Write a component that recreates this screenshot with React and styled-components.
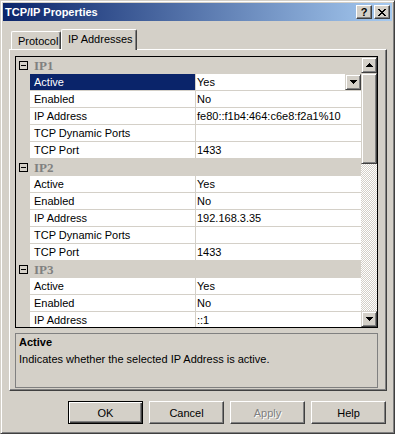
import React from 'react'
import styled, { createGlobalStyle, css } from 'styled-components'

const GlobalStyle = createGlobalStyle`
    * { box-sizing: border-box; }
    body {
        margin: 0;
        font-family: "Liberation Sans", Arial, sans-serif;
        font-size: 11px;
        color: #000;
    }
`

const raised = css`
    border: 1px solid;
    border-color: #d4d0c8 #404040 #404040 #d4d0c8;
    box-shadow: inset 1px 1px #fff, inset -1px -1px #808080;
    background: #d4d0c8;
`

const Window = styled.div`
    width: 395px;
    height: 434px;
    padding: 2px;
    background: #d4d0c8;
    border: 1px solid;
    border-color: #d4d0c8 #404040 #404040 #d4d0c8;
    box-shadow: inset 1px 1px #fff, inset -1px -1px #808080;
    display: flex;
    flex-direction: column;
`

const TitleBar = styled.div`
    height: 18px;
    flex-shrink: 0;
    display: flex;
    align-items: center;
    justify-content: space-between;
    padding: 0 2px 0 2px;
    background: linear-gradient(to right, #0a246a, #a6caf0);
`

const Caption = styled.span`
    color: #fff;
    font-weight: bold;
    font-size: 11px;
`

const CaptionButtons = styled.div`
    display: flex;
    gap: 2px;
`

const CaptionButton = styled.div`
    ${raised}
    width: 16px;
    height: 14px;
    display: flex;
    align-items: center;
    justify-content: center;
    font-weight: bold;
    font-size: 11px;
    line-height: 12px;
    border-color: #fff #404040 #404040 #fff;
    box-shadow: inset -1px -1px #808080;
`

const Body = styled.div`
    flex: 1;
    display: flex;
    flex-direction: column;
    padding: 8px 5px 0 6px;
`

const TabStrip = styled.div`
    height: 20px;
    flex-shrink: 0;
    display: flex;
    align-items: flex-end;
    padding-left: 2px;
`

const Tab = styled.div`
    position: relative;
    background: #d4d0c8;
    border: 1px solid;
    border-bottom: none;
    border-color: #fff #404040 #404040 #fff;
    box-shadow: inset -1px 0 #808080;
    border-radius: 2px 2px 0 0;
    width: ${(props) => props.$width}px;
    height: ${(props) => (props.$active ? 21 : 18)}px;
    margin-bottom: ${(props) => (props.$active ? -1 : 0)}px;
    z-index: ${(props) => (props.$active ? 2 : 1)};
    padding: 3px 0 0 6px;
    line-height: 13px;
`

const Panel = styled.div`
    height: 342px;
    flex-shrink: 0;
    border: 1px solid;
    border-color: #fff #404040 #404040 #fff;
    box-shadow: inset -1px -1px #808080;
    padding: 6px 0 0 5px;
    display: flex;
    flex-direction: column;
`

const Grid = styled.div`
    width: 363px;
    height: 272px;
    flex-shrink: 0;
    border: 1px solid #000;
    background: #fff;
    display: flex;
`

const GridRows = styled.div`
    flex: 1;
    overflow: hidden;
`

const CategoryRow = styled.div`
    height: 17px;
    display: flex;
    align-items: center;
    background: #d4d0c8;
`

const Expander = styled.div`
    width: 14px;
    display: flex;
    justify-content: center;
    padding-left: 1px;
`

const CategoryLabel = styled.span`
    padding-left: 4px;
    font-family: "Liberation Serif", "Times New Roman", serif;
    font-weight: bold;
    font-size: 13px;
    color: #808080;
`

const Row = styled.div`
    display: grid;
    grid-template-columns: 14px 166px 165px;
    height: 17px;
`

const Gutter = styled.div`
    background: #d4d0c8;
`

const NameCell = styled.div`
    border-bottom: 1px solid #d4d0c8;
    border-right: 1px solid #d4d0c8;
    padding-left: 4px;
    line-height: 16px;
    white-space: nowrap;
    background: ${(props) => (props.$selected ? '#0a246a' : '#fff')};
    color: ${(props) => (props.$selected ? '#fff' : '#000')};
`

const ValueCell = styled.div`
    border-bottom: 1px solid #d4d0c8;
    padding-left: 1px;
    line-height: 16px;
    white-space: nowrap;
    overflow: hidden;
    display: flex;
`

const DropButton = styled.div`
    ${raised}
    margin-left: auto;
    width: 16px;
    height: 16px;
    display: flex;
    align-items: center;
    justify-content: center;
`

const ScrollBar = styled.div`
    width: 16px;
    display: flex;
    flex-direction: column;
`

const ScrollButton = styled.div`
    ${raised}
    height: 16px;
    display: flex;
    align-items: center;
    justify-content: center;
`

const Thumb = styled.div`
    ${raised}
    height: 91px;
`

const Track = styled.div`
    flex: 1;
    background: repeating-conic-gradient(#fff 0 25%, #d4d0c8 0 50%) 0 0 / 2px 2px;
`

const HelpPane = styled.div`
    width: 363px;
    height: 55px;
    flex-shrink: 0;
    margin-top: 5px;
    border: 1px solid #808080;
    padding: 1px 3px;
    line-height: 14px;
`

const HelpTitle = styled.div`
    font-weight: bold;
`

const HelpText = styled.div`
    margin-top: 3px;
`

const ButtonRow = styled.div`
    display: flex;
    justify-content: flex-end;
    gap: 6px;
    margin-top: 10px;
    padding-right: 1px;
`

const Button = styled.div`
    width: 75px;
    height: 23px;
    display: flex;
    align-items: center;
    justify-content: center;
    border: 1px solid;
    border-color: ${(props) => (props.$default ? '#000' : '#fff #404040 #404040 #fff')};
    box-shadow: ${(props) =>
        props.$default
            ? 'inset 1px 1px #fff, inset -1px -1px #404040, inset -2px -2px #808080'
            : 'inset -1px -1px #808080'};
    color: ${(props) => (props.$disabled ? '#808080' : '#000')};
    text-shadow: ${(props) => (props.$disabled ? '1px 1px #fff' : 'none')};
`

// only the rows that fit in the visible part of the grid
const groups = [
    {
        name: 'IP1',
        props: [
            ['Active', 'Yes'],
            ['Enabled', 'No'],
            ['IP Address', 'fe80::f1b4:464:c6e8:f2a1%10'],
            ['TCP Dynamic Ports', ''],
            ['TCP Port', '1433'],
        ],
    },
    {
        name: 'IP2',
        props: [
            ['Active', 'Yes'],
            ['Enabled', 'No'],
            ['IP Address', '192.168.3.35'],
            ['TCP Dynamic Ports', ''],
            ['TCP Port', '1433'],
        ],
    },
    {
        name: 'IP3',
        props: [
            ['Active', 'Yes'],
            ['Enabled', 'No'],
            ['IP Address', '::1'],
        ],
    },
]

const Arrow = ({ up }) => (
    <svg width="7" height="4" viewBox="0 0 7 4" shapeRendering="crispEdges">
        <path d={up ? 'M3 0h1v1h1v1h1v1h1v1H0V3h1V2h1V1h1z' : 'M0 0h7v1H6v1H5v1H4v1H3V3H2V2H1V1H0z'} fill="#000" />
    </svg>
)

const Minus = () => (
    <svg width="9" height="9" viewBox="0 0 9 9" shapeRendering="crispEdges">
        <rect x="0.5" y="0.5" width="8" height="8" fill="none" stroke="#000" />
        <rect x="2" y="4" width="5" height="1" fill="#000" />
    </svg>
)

const CloseGlyph = () => (
    <svg width="8" height="7" viewBox="0 0 8 7" shapeRendering="crispEdges">
        <path d="M0 0h2v1h1v1h2V1h1V0h2v1H7v1H6v1H5v1h1v1h1v1h1v1H6V6H5V5H3v1H2v1H0V6h1V5h1V4h1V3H2V2H1V1H0z" fill="#000" />
    </svg>
)

function App() {
    return (
        <>
            <GlobalStyle />
            <Window>
                <TitleBar>
                    <Caption>TCP/IP Properties</Caption>
                    <CaptionButtons>
                        <CaptionButton>?</CaptionButton>
                        <CaptionButton>
                            <CloseGlyph />
                        </CaptionButton>
                    </CaptionButtons>
                </TitleBar>
                <Body>
                    <TabStrip>
                        <Tab $width={50}>Protocol</Tab>
                        <Tab $width={76} $active>IP Addresses</Tab>
                    </TabStrip>
                    <Panel>
                        <Grid>
                            <GridRows>
                                {groups.map((group, gi) => (
                                    <React.Fragment key={group.name}>
                                        <CategoryRow>
                                            <Expander>
                                                <Minus />
                                            </Expander>
                                            <CategoryLabel>{group.name}</CategoryLabel>
                                        </CategoryRow>
                                        {group.props.map(([name, value], pi) => {
                                            const selected = gi === 0 && pi === 0
                                            return (
                                                <Row key={name}>
                                                    <Gutter />
                                                    <NameCell $selected={selected}>{name}</NameCell>
                                                    <ValueCell>
                                                        {value}
                                                        {selected && (
                                                            <DropButton>
                                                                <Arrow />
                                                            </DropButton>
                                                        )}
                                                    </ValueCell>
                                                </Row>
                                            )
                                        })}
                                    </React.Fragment>
                                ))}
                            </GridRows>
                            <ScrollBar>
                                <ScrollButton>
                                    <Arrow up />
                                </ScrollButton>
                                <Thumb />
                                <Track />
                                <ScrollButton>
                                    <Arrow />
                                </ScrollButton>
                            </ScrollBar>
                        </Grid>
                        <HelpPane>
                            <HelpTitle>Active</HelpTitle>
                            <HelpText>Indicates whether the selected IP Address is active.</HelpText>
                        </HelpPane>
                    </Panel>
                    <ButtonRow>
                        <Button $default>OK</Button>
                        <Button>Cancel</Button>
                        <Button $disabled>Apply</Button>
                        <Button>Help</Button>
                    </ButtonRow>
                </Body>
            </Window>
        </>
    )
}

export default App
